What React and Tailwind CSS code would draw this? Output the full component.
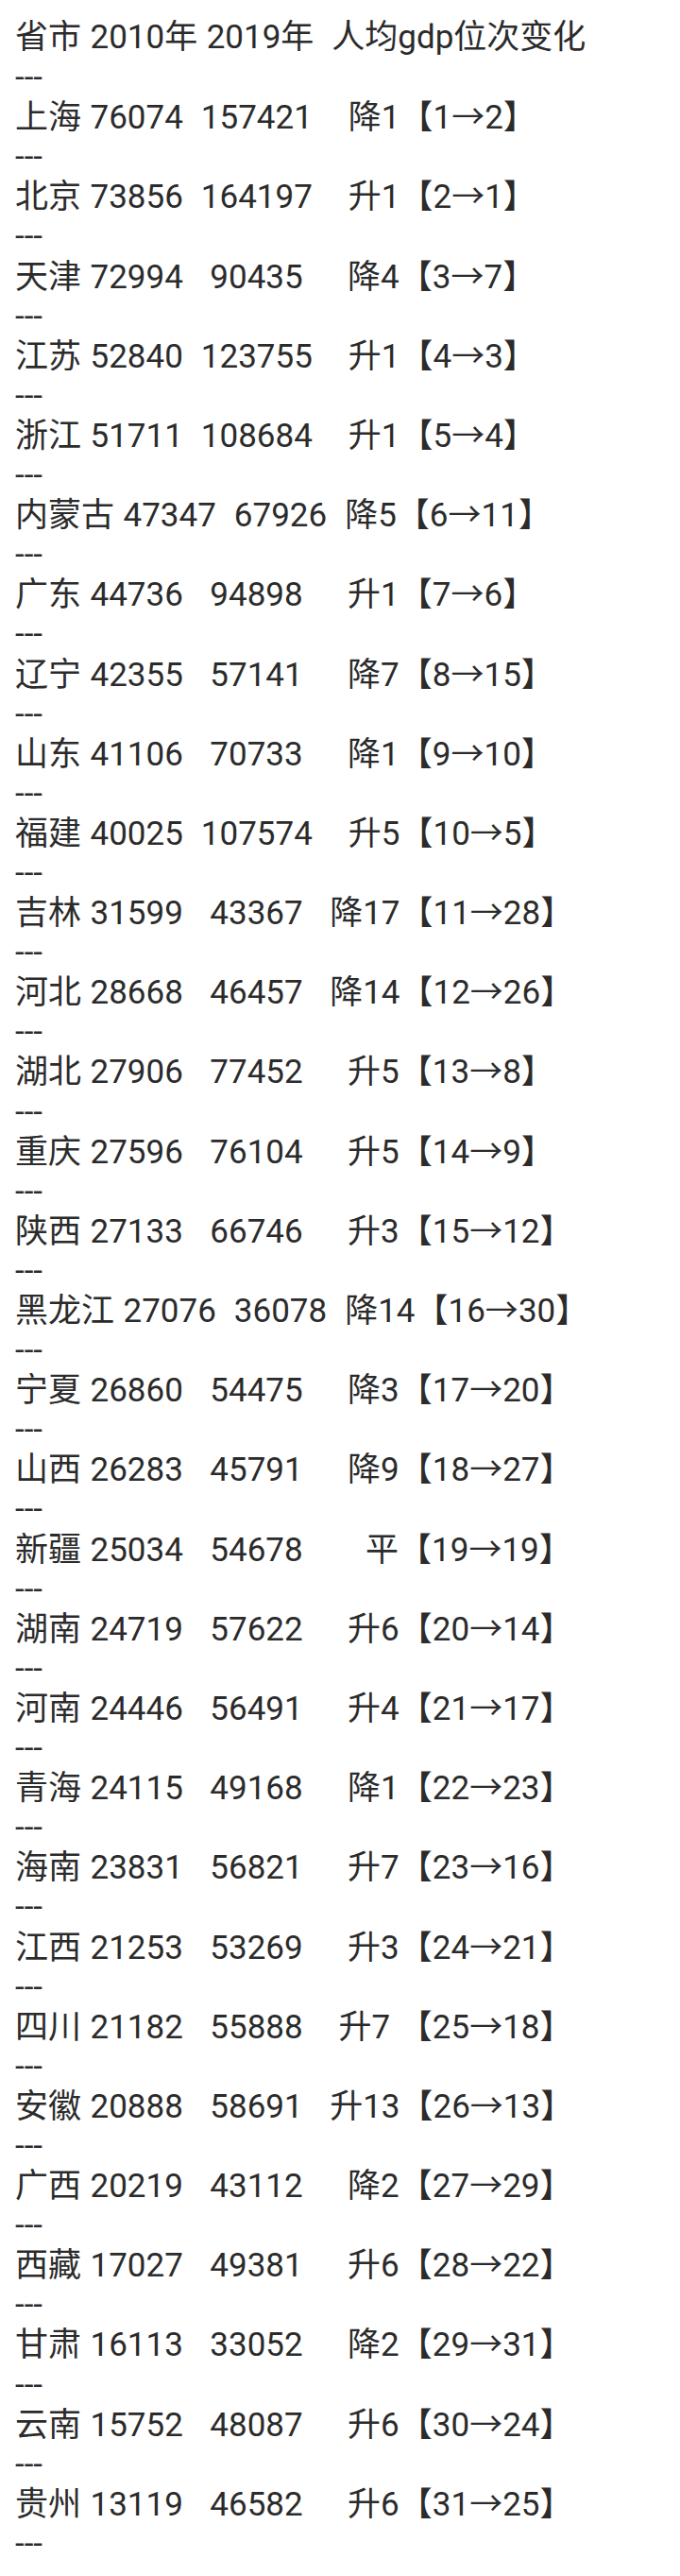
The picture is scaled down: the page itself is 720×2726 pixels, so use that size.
import React from "react";

// [省市, 2010年, 2019年, 变化, 起, 止, 数字间空格, 变化前空格, 括号前空格]
const rows = [
  ["上海", "76074", "157421", "降1", 1, 2, 2, 4],
  ["北京", "73856", "164197", "升1", 2, 1, 2, 4],
  ["天津", "72994", "90435", "降4", 3, 7, 3, 5],
  ["江苏", "52840", "123755", "升1", 4, 3, 2, 4],
  ["浙江", "51711", "108684", "升1", 5, 4, 2, 4],
  ["内蒙古", "47347", "67926", "降5", 6, 11, 2, 2],
  ["广东", "44736", "94898", "升1", 7, 6, 3, 5],
  ["辽宁", "42355", "57141", "降7", 8, 15, 3, 5],
  ["山东", "41106", "70733", "降1", 9, 10, 3, 5],
  ["福建", "40025", "107574", "升5", 10, 5, 2, 4],
  ["吉林", "31599", "43367", "降17", 11, 28, 3, 3],
  ["河北", "28668", "46457", "降14", 12, 26, 3, 3],
  ["湖北", "27906", "77452", "升5", 13, 8, 3, 5],
  ["重庆", "27596", "76104", "升5", 14, 9, 3, 5],
  ["陕西", "27133", "66746", "升3", 15, 12, 3, 5],
  ["黑龙江", "27076", "36078", "降14", 16, 30, 2, 2],
  ["宁夏", "26860", "54475", "降3", 17, 20, 3, 5],
  ["山西", "26283", "45791", "降9", 18, 27, 3, 5],
  ["新疆", "25034", "54678", "平", 19, 19, 3, 7],
  ["湖南", "24719", "57622", "升6", 20, 14, 3, 5],
  ["河南", "24446", "56491", "升4", 21, 17, 3, 5],
  ["青海", "24115", "49168", "降1", 22, 23, 3, 5],
  ["海南", "23831", "56821", "升7", 23, 16, 3, 5],
  ["江西", "21253", "53269", "升3", 24, 21, 3, 5],
  ["四川", "21182", "55888", "升7", 25, 18, 3, 4, 1],
  ["安徽", "20888", "58691", "升13", 26, 13, 3, 3],
  ["广西", "20219", "43112", "降2", 27, 29, 3, 5],
  ["西藏", "17027", "49381", "升6", 28, 22, 3, 5],
  ["甘肃", "16113", "33052", "降2", 29, 31, 3, 5],
  ["云南", "15752", "48087", "升6", 30, 24, 3, 5],
  ["贵州", "13119", "46582", "升6", 31, 25, 3, 5],
];

const sp = (n) => " ".repeat(n);

const Line = ({ children }) => (
  <p className="h-[42.1px] overflow-visible">{children}</p>
);

const Dash = () => <Line>---</Line>;

export default function App() {
  return (
    <div className="min-h-[2726px] bg-white pl-4 pt-[19px] text-[35px] leading-[42.1px] text-[#2b2b2b] whitespace-pre [word-spacing:0.8px] font-[Roboto,'Noto_Sans_CJK_SC',sans-serif]">
      <Line>省市 2010年 2019年{sp(2)}人均gdp位次变化</Line>
      <Dash />
      {rows.map(([name, a, b, change, from, to, gap1, gap2, gap3]) => (
        <React.Fragment key={name}>
          <Line>
            {name} {a}
            {sp(gap1)}
            {b}
            {sp(gap2)}
            {change}
            {gap3 ? sp(gap3) : ""}【{from}
            <span className="leading-none font-['Noto_Sans_CJK_SC',sans-serif]">→</span>
            {to}】
          </Line>
          <Dash />
        </React.Fragment>
      ))}
    </div>
  );
}
